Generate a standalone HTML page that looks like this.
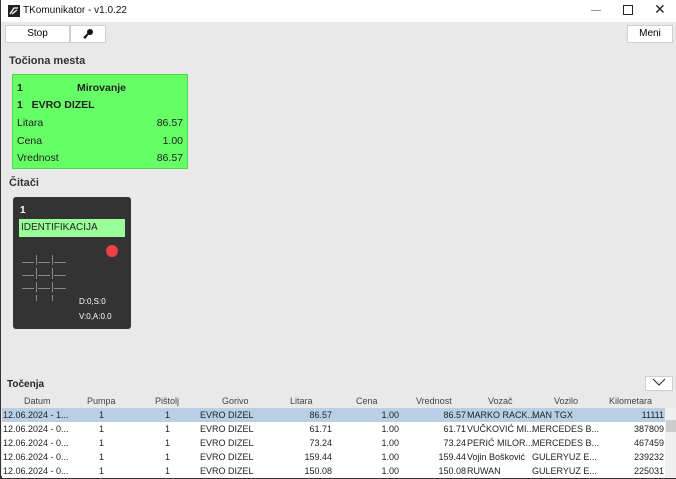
<!DOCTYPE html>
<html><head><style>
body{margin:0;width:676px;height:479px;overflow:hidden;background:#3a3030;font-family:"Liberation Sans",sans-serif;position:relative}
.win{position:absolute;left:1px;top:0;width:675px;height:476px;background:#e9e9e9}
.title{position:absolute;left:0;top:0;width:675px;height:22px;background:#fff;font-size:10px}
.abs{position:absolute}
.btn{position:absolute;background:#fff;border:1px solid #cfcfcf;font-size:10px;text-align:center;line-height:16px;height:16px}
.card{position:absolute;left:11px;top:74px;width:174px;height:93px;background:#66ff66;border:1px solid #4cd94c;font-size:10.5px;color:#222}
.card div{position:absolute}
.rd{position:absolute;left:12px;top:197px;width:118px;height:132px;background:#333;border-radius:3px;color:#fff}
.tbl{position:absolute;left:1px;top:394px;width:675px;font-size:9px;color:#222}
.row{position:absolute;left:0;width:663px;height:14px;line-height:14px;background:#fff}
.row span,.hd span{position:absolute;white-space:nowrap}
.hd{position:absolute;left:0;top:1px;width:663px;height:13px;line-height:13px;color:#444}
</style></head><body>
<div class="win">
 <div class="title">
  <svg class="abs" style="left:7px;top:5px" width="12" height="12"><rect width="12" height="12" fill="#222"/><path d="M2 9 L6 3 L10 3 M4 9 L9 5" stroke="#fff" stroke-width="1.3" fill="none"/></svg>
  <div class="abs" style="left:22px;top:5px;color:#111">TKomunikator - v1.0.22</div>
  <div class="abs" style="left:590px;top:10px;width:10px;height:1px;background:#999"></div>
  <div class="abs" style="left:622px;top:5px;width:8px;height:8px;border:1px solid #222"></div>
  <div class="abs" style="left:653px;top:1px;font-size:14px;color:#222">✕</div>
 </div>
 <div class="btn" style="left:4px;top:25px;width:63px">Stop</div>
 <div class="btn" style="left:69px;top:25px;width:34px">
  <svg width="12" height="12" style="margin-top:2px"><circle cx="8" cy="4" r="3" fill="#111"/><path d="M6 6 L2 10 M3 9 L4 10" stroke="#111" stroke-width="2"/></svg></div>
 <div class="btn" style="left:626px;top:25px;width:44px">Meni</div>
 <div class="abs" style="left:8px;top:55px;font-size:11px;font-weight:bold;color:#333">Točiona mesta</div>
 <div class="card">
  <div style="left:4px;top:7px;font-weight:bold">1</div>
  <div style="left:64px;top:7px;font-weight:bold">Mirovanje</div>
  <div style="left:4px;top:24px;font-weight:bold">1&nbsp;&nbsp;&nbsp;EVRO DIZEL</div>
  <div style="left:4px;top:42px">Litara</div><div style="right:4px;top:42px">86.57</div>
  <div style="left:4px;top:60px">Cena</div><div style="right:4px;top:60px">1.00</div>
  <div style="left:4px;top:77px">Vrednost</div><div style="right:4px;top:77px">86.57</div>
 </div>
 <div class="abs" style="left:8px;top:177px;font-size:11px;font-weight:bold;color:#333">Čitači</div>
 <div class="rd">
  <div class="abs" style="left:7px;top:8px;font-size:10px;font-weight:bold">1</div>
  <div class="abs" style="left:6px;top:22px;width:104px;height:18px;background:#99ff99;color:#222;font-size:10px;line-height:18px;padding-left:2px">IDENTIFIKACIJA</div>
  <div class="abs" style="left:93px;top:48px;width:12px;height:12px;border-radius:6px;background:#f04040"></div>
  <svg class="abs" style="left:8px;top:55px" width="50" height="50" stroke="#888" stroke-width="1"><path d="M1 10.5H13M17 10.5H29M33 10.5H45M1 23.5H13M17 23.5H29M33 23.5H45M1 36.5H13M17 36.5H29M33 36.5H45M15.5 3V13M31.5 3V13M15.5 16V27M31.5 16V27M15.5 30V40M31.5 30V40M15.5 43V49M31.5 43V49"/></svg>
  <div class="abs" style="left:66px;top:100px;font-size:8px">D:0,S:0</div>
  <div class="abs" style="left:66px;top:115px;font-size:8px">V:0,A:0.0</div>
 </div>
 <div class="abs" style="left:6px;top:379px;font-size:10px;font-weight:bold;color:#222">Točenja</div>
 <div class="btn" style="left:644px;top:376px;width:26px;height:13px;line-height:13px"><svg width="14" height="8"><path d="M1 1 L7 7 L13 1" stroke="#222" fill="none"/></svg></div>
 <div class="tbl">
  <div class="hd"><span style="left:22px">Datum</span><span style="left:85px">Pumpa</span><span style="left:153px">Pištolj</span><span style="left:220px">Gorivo</span><span style="left:288px">Litara</span><span style="left:354px">Cena</span><span style="left:414px">Vrednost</span><span style="left:486px">Vozač</span><span style="left:552px">Vozilo</span><span style="left:607px">Kilometara</span></div>
  <div class="row" style="top:14px;background:#b8cfe6"><span style="left:1px">12.06.2024 - 1...</span><span style="left:97px">1</span><span style="left:163px">1</span><span style="left:198px">EVRO DIZEL</span><span style="right:333px">86.57</span><span style="right:266px">1.00</span><span style="right:199px">86.57</span><span style="left:465px">MARKO RACK...</span><span style="left:530px">MAN TGX</span><span style="right:1px">11111</span></div>
  <div class="row" style="top:28px"><span style="left:1px">12.06.2024 - 0...</span><span style="left:97px">1</span><span style="left:163px">1</span><span style="left:198px">EVRO DIZEL</span><span style="right:333px">61.71</span><span style="right:266px">1.00</span><span style="right:199px">61.71</span><span style="left:465px">VUČKOVIĆ MI...</span><span style="left:530px">MERCEDES B...</span><span style="right:1px">387809</span></div>
  <div class="row" style="top:42px"><span style="left:1px">12.06.2024 - 0...</span><span style="left:97px">1</span><span style="left:163px">1</span><span style="left:198px">EVRO DIZEL</span><span style="right:333px">73.24</span><span style="right:266px">1.00</span><span style="right:199px">73.24</span><span style="left:465px">PERIĆ MILOR...</span><span style="left:530px">MERCEDES B...</span><span style="right:1px">467459</span></div>
  <div class="row" style="top:56px"><span style="left:1px">12.06.2024 - 0...</span><span style="left:97px">1</span><span style="left:163px">1</span><span style="left:198px">EVRO DIZEL</span><span style="right:333px">159.44</span><span style="right:266px">1.00</span><span style="right:199px">159.44</span><span style="left:465px">Vojin Bošković</span><span style="left:530px">GULERYUZ E...</span><span style="right:1px">239232</span></div>
  <div class="row" style="top:70px"><span style="left:1px">12.06.2024 - 0...</span><span style="left:97px">1</span><span style="left:163px">1</span><span style="left:198px">EVRO DIZEL</span><span style="right:333px">150.08</span><span style="right:266px">1.00</span><span style="right:199px">150.08</span><span style="left:465px">RUWAN</span><span style="left:530px">GULERYUZ E...</span><span style="right:1px">225031</span></div>
  <div class="abs" style="left:663px;top:14px;width:12px;height:70px;background:#f0f0f0"><div class="abs" style="left:1px;top:12px;width:10px;height:12px;background:#cdcdcd"></div></div>
 </div>
</div>
</body></html>
